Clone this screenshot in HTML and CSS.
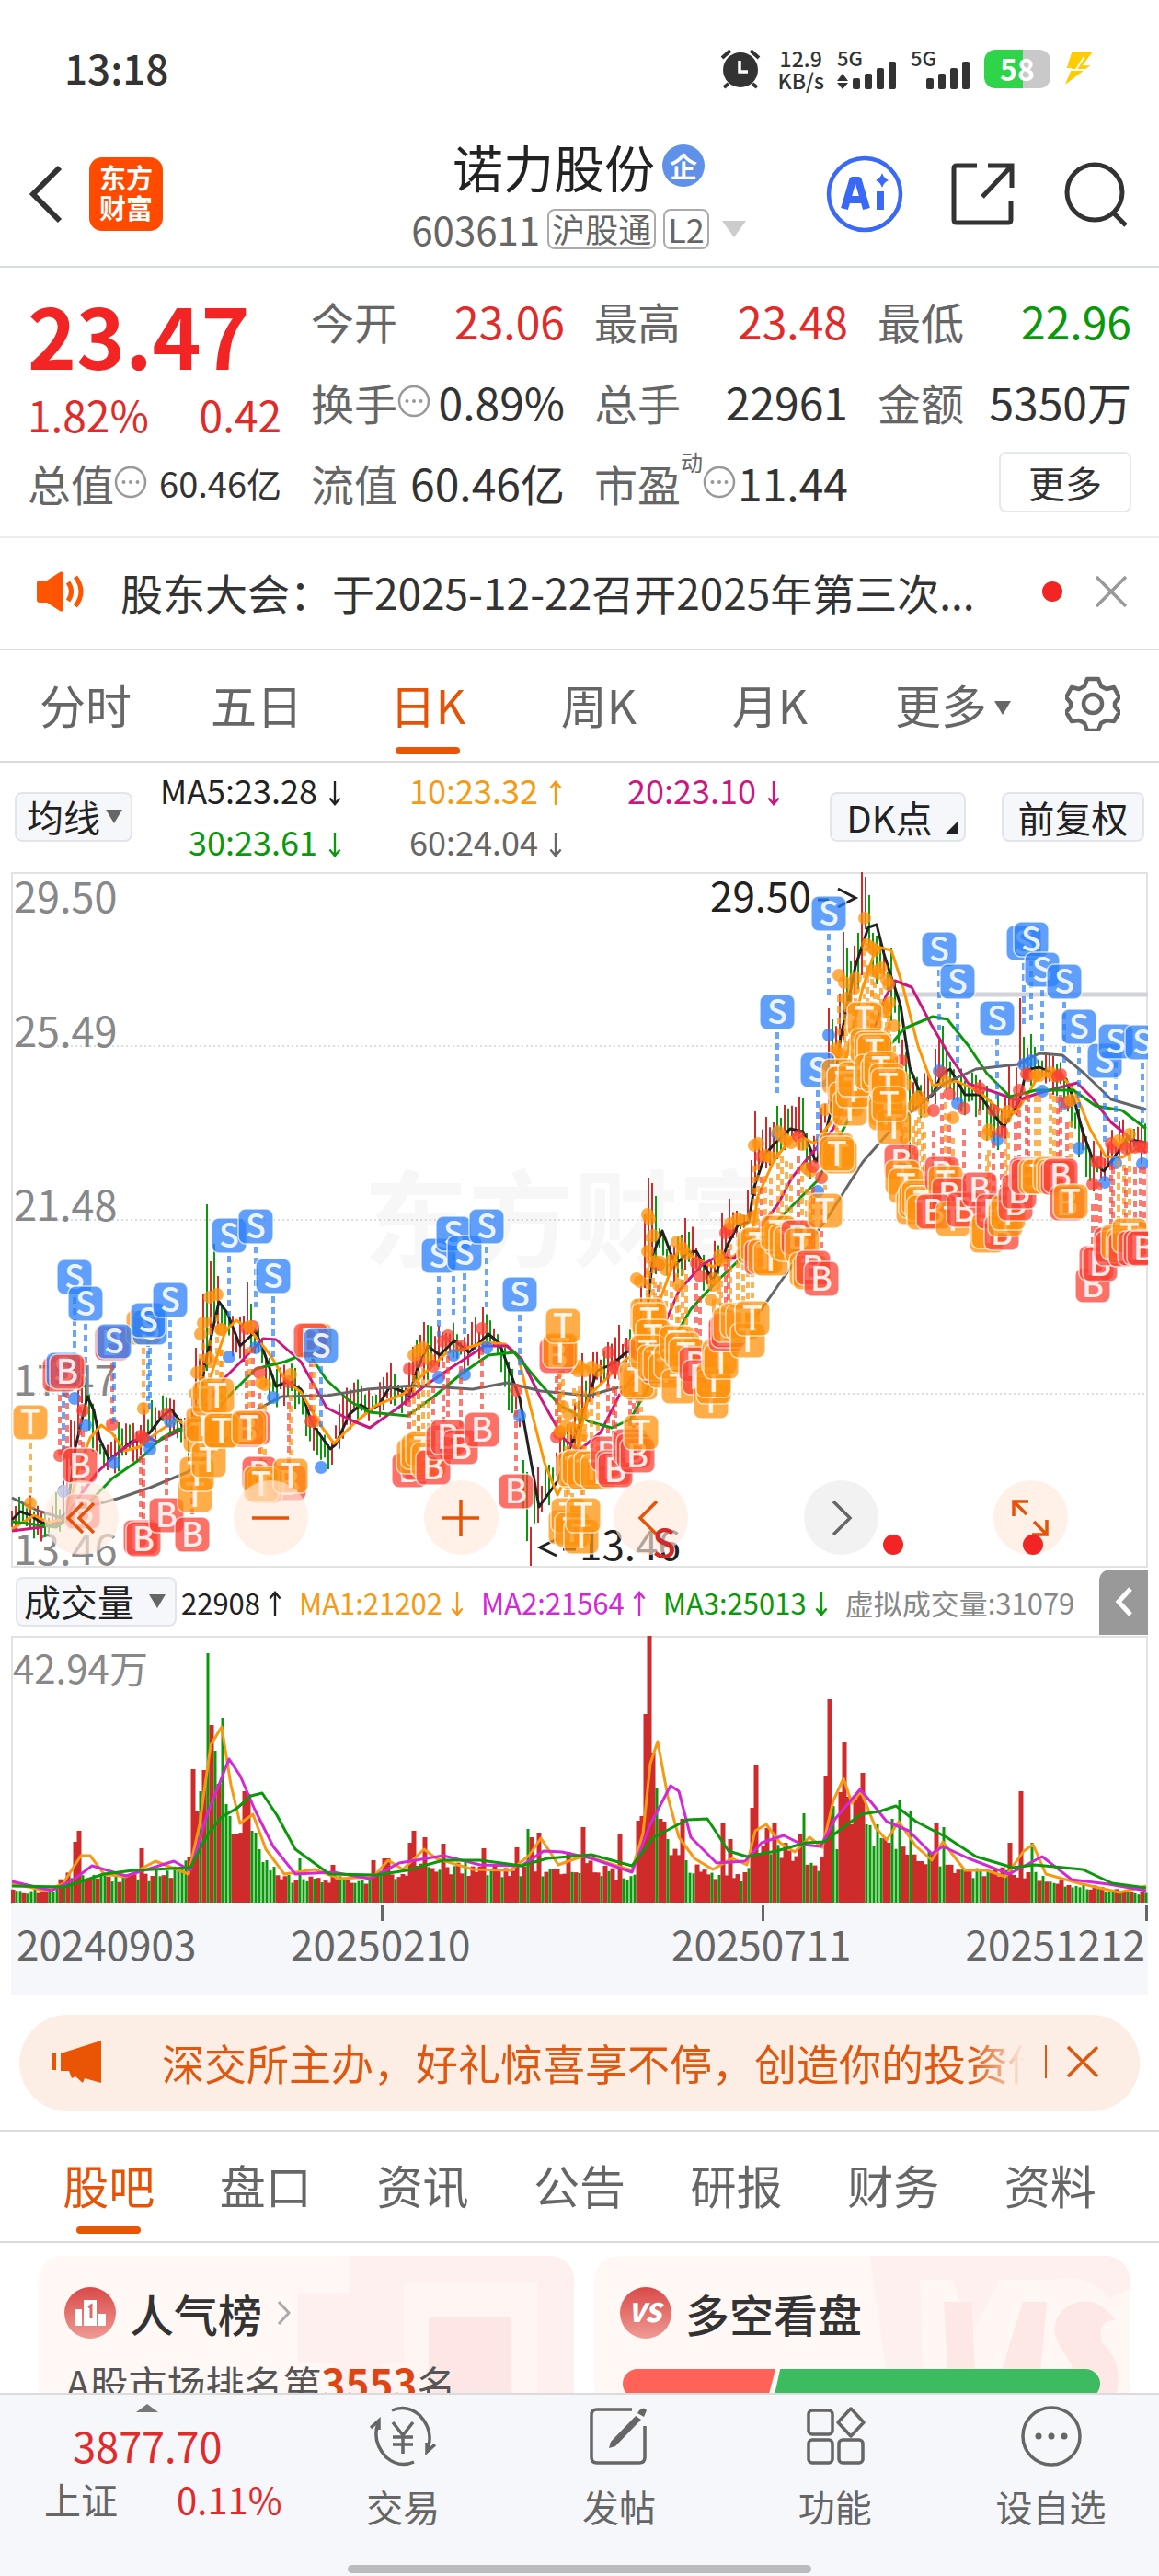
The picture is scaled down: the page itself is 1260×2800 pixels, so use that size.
FILE: index.html
```html
<!DOCTYPE html>
<html lang="zh-CN">
<head>
    <meta charset="UTF-8">
    <meta name="viewport" content="width=device-width, initial-scale=1.0">
    <title>诺力股份 603611</title>
    <link rel="stylesheet" href="styles.css">
</head>
<body>
    <svg class="defs" aria-hidden="true">
        <symbol id="down" viewBox="0 0 16 30"><path d="M8 1v27M2 21l6 7 6-7" fill="none" stroke="currentColor" stroke-width="2.5"/></symbol>
        <symbol id="up" viewBox="0 0 16 30"><path d="M8 29V2M2 9l6-7 6 7" fill="none" stroke="currentColor" stroke-width="2.5"/></symbol>
        <symbol id="more" viewBox="0 0 36 36"><circle cx="18" cy="18" r="16" fill="none" stroke="#999" stroke-width="2.5"/><g fill="#999"><circle cx="10.500" cy="18" r="2"/><circle cx="18" cy="18" r="2"/><circle cx="25.500" cy="18" r="2"/></g></symbol>
        <symbol id="close" viewBox="0 0 36 36"><path d="M2 2l32 32M34 2L2 34" fill="none" stroke="currentColor" stroke-width="3.500"/></symbol>
    </svg>

    <div class="status-bar">
        <span class="clock">13:18</span>
        <div class="status-icons">
            <svg class="alarm" viewBox="0 0 44 44"><circle cx="22" cy="23" r="19" fill="#333"/><path d="M2 10l9-8M42 10l-9-8M9 38l-5 4M35 38l5 4" stroke="#333" stroke-width="4"/><path d="M21 13v12h9" fill="none" stroke="#fff" stroke-width="3.5"/></svg>
            <span class="speed">12.9<br>KB/s</span>
            <span class="signal"><small>5G</small><svg viewBox="0 0 66 44"><g fill="#333"><path d="M0 35l6-8 6 8zM0 37l6 7 6-7z"/><rect x="17" y="32" width="8" height="12" rx="2"/><rect x="30" y="27" width="8" height="17" rx="2"/><rect x="43" y="21" width="8" height="23" rx="2"/><rect x="56" y="14" width="8" height="30" rx="2"/></g></svg></span>
            <span class="signal"><small>5G</small><svg viewBox="0 0 66 44"><g fill="#333"><rect x="17" y="32" width="8" height="12" rx="2"/><rect x="30" y="27" width="8" height="17" rx="2"/><rect x="43" y="21" width="8" height="23" rx="2"/><rect x="56" y="14" width="8" height="30" rx="2"/></g></svg></span>
            <span class="battery">58</span>
            <svg class="bolt" viewBox="0 0 36 40"><path d="M10 0h24L22 16h9L2 38l8-19H4z" fill="#fc0"/><path d="M14 22L24 6M8 21h18" stroke="#fff" stroke-width="2"/></svg>
        </div>
    </div>

    <header class="header">
        <div class="header-left">
            <button class="icon-btn" aria-label="返回"><svg width="36" height="64" viewBox="0 0 36 64"><path d="M33 3L4 32l29 29" fill="none" stroke="#333" stroke-width="6"/></svg></button>
            <a class="logo" href="#">东方<br>财富</a>
        </div>
        <div class="stock">
            <h1>诺力股份<span class="badge-qi">企</span></h1>
            <div class="stock-code">603611<span class="tag">沪股通</span><span class="tag">L2</span><i class="tri-down"></i></div>
        </div>
        <div class="header-right">
            <button class="icon-btn" aria-label="AI"><svg width="84" height="84" viewBox="0 0 84 84"><circle cx="42" cy="42" r="39" fill="none" stroke="#3a68f7" stroke-width="4.500"/><path d="M20 58l9-31h6l9 31M24 48h16M59 39v20" fill="none" stroke="#3a68f7" stroke-width="8" stroke-linejoin="round"/><path d="M61 19q2 6 7 8-5 2-7 8-2-6-7-8 5-2 7-8z" fill="#3a68f7"/></svg></button>
            <button class="icon-btn" aria-label="分享"><svg width="70" height="70" viewBox="0 0 70 70"><path d="M28 4H6q-3 0-3 3v56q0 3 3 3h56q3 0 3-3V42M40 4h26v24M66 4L34 38" fill="none" stroke="#333" stroke-width="5"/></svg></button>
            <button class="icon-btn" aria-label="搜索"><svg width="72" height="72" viewBox="0 0 72 72"><circle cx="34" cy="34" r="30" fill="none" stroke="#333" stroke-width="5"/><path d="M54 56l14 14" stroke="#333" stroke-width="5"/></svg></button>
        </div>
    </header>

    <section class="quote">
        <div class="price-box">
            <div class="price">23.47</div>
            <div class="change"><span>1.82%</span><span>0.42</span></div>
        </div>
        <div class="item"><span>今开</span><b class="red">23.06</b></div>
        <div class="item"><span>最高</span><b class="red">23.48</b></div>
        <div class="item"><span>最低</span><b class="green">22.96</b></div>
        <div class="item"><span>换手<svg class="more"><use href="#more"/></svg></span><b>0.89%</b></div>
        <div class="item"><span>总手</span><b>22961</b></div>
        <div class="item"><span>金额</span><b>5350万</b></div>
        <div class="item"><span>总值<svg class="more"><use href="#more"/></svg></span><b class="small">60.46亿</b></div>
        <div class="item"><span>流值</span><b>60.46亿</b></div>
        <div class="item"><span>市盈<sup>动</sup><svg class="more"><use href="#more"/></svg></span><b>11.44</b></div>
        <div class="item item-btn"><button class="more-btn">更多</button></div>
    </section>

    <section class="notice">
        <svg class="horn" viewBox="0 0 52 44"><path d="M0 13q0-3 3-3h8L25 1q4-2 4 3v36q0 5-4 3L11 34H3q-3 0-3-3z" fill="#ff5500"/><path d="M34 12q7 10 0 20M42 6q12 16 0 32" fill="none" stroke="#ff5500" stroke-width="5"/></svg>
        <a class="notice-text" href="#">股东大会：于2025-12-22召开2025年第三次...</a>
        <i class="dot"></i>
        <button class="icon-btn gray" aria-label="关闭"><svg class="close"><use href="#close"/></svg></button>
    </section>

    <nav class="period-tabs">
        <a href="#">分时</a>
        <a href="#">五日</a>
        <a href="#" class="active">日K</a>
        <a href="#">周K</a>
        <a href="#">月K</a>
        <a href="#" class="wide">更多<i class="tri-small"></i></a>
        <button class="icon-btn" aria-label="设置"><svg width="60" height="60" viewBox="0 0 60 60"><path d="M24 3h12l3 8 6 3 8-2 6 11-5 6v4l5 6-6 10-8-1-6 3-3 8H24l-3-8-6-3-8 1-6-10 5-6v-4l-5-6 6-11 8 2 6-3z" fill="none" stroke="#666" stroke-width="4.500" stroke-linejoin="round"/><circle cx="30" cy="30" r="10" fill="none" stroke="#666" stroke-width="4.500"/></svg></button>
    </nav>

    <section class="ma-bar">
        <label class="select"><select aria-label="主图指标"><option>均线</option></select></label>
        <div class="ma-values">
            <span class="ma5">MA5:23.28<svg class="arrow"><use href="#down"/></svg></span>
            <span class="orange">10:23.32<svg class="arrow"><use href="#up"/></svg></span>
            <span class="pink">20:23.10<svg class="arrow"><use href="#down"/></svg></span>
            <span class="green">30:23.61<svg class="arrow"><use href="#down"/></svg></span>
            <span class="grey">60:24.04<svg class="arrow"><use href="#down"/></svg></span>
        </div>
        <button class="chip chip-dk">DK点<i class="corner"></i></button>
        <button class="chip">前复权</button>
    </section>

    <section class="chart-box">
        <svg id="kline" class="chart" viewBox="12 948 1236 756" role="img" aria-label="日K线"></svg>
        <div class="controls">
            <button class="round" aria-label="最左"><svg viewBox="0 0 40 40"><path d="M22 4L6 20l16 16M34 4L18 20l16 16"/></svg></button>
            <button class="round" aria-label="缩小"><svg viewBox="0 0 40 40"><path d="M0 20h40"/></svg></button>
            <button class="round" aria-label="放大"><svg viewBox="0 0 40 40"><path d="M0 20h40M20 0v40"/></svg></button>
            <button class="round" aria-label="左移"><svg viewBox="0 0 40 40"><path d="M27 2L9 20l18 18"/></svg><i class="flag">S</i></button>
            <button class="round off" aria-label="右移"><svg viewBox="0 0 40 40"><path d="M12 2l18 18-18 18"/></svg><i class="dot pin pin-side"></i></button>
            <button class="round" aria-label="全屏"><svg viewBox="0 0 40 40"><path d="M2 18V2h16M2 2l14 14M38 22v16H22M38 38L24 24"/></svg><i class="dot pin"></i></button>
        </div>
    </section>

    <section class="vol-bar">
        <label class="select select-vol"><select aria-label="副图指标"><option>成交量</option></select></label>
        <span class="ma5">22908<svg class="arrow"><use href="#up"/></svg></span>
        <span class="orange">MA1:21202<svg class="arrow"><use href="#down"/></svg></span>
        <span class="magenta">MA2:21564<svg class="arrow"><use href="#up"/></svg></span>
        <span class="green">MA3:25013<svg class="arrow"><use href="#down"/></svg></span>
        <span class="virtual">虚拟成交量:31079</span>
        <button class="expand" aria-label="展开"><svg width="20" height="32" viewBox="0 0 20 32"><path d="M17 2L4 16l13 14" fill="none" stroke="#fff" stroke-width="5"/></svg></button>
    </section>
    <section class="chart-box">
        <svg id="volume" class="chart" viewBox="12 1778 1236 292" role="img" aria-label="成交量"></svg>
        <div class="dates"><span>20240903</span><span>20250210</span><span>20250711</span><span>20251212</span></div>
    </section>

    <section class="banner">
        <svg class="megaphone" viewBox="0 0 54 46"><path d="M0 14h5v18H0zM10 14L54 0v46l-18-5-2 5-8-7-4 2-3-8h-9z" fill="#e95504"/></svg>
        <a class="banner-text" href="#">深交所主办，好礼惊喜享不停，创造你的投资传奇</a>
        <button class="icon-btn banner-close" aria-label="关闭"><svg class="close"><use href="#close"/></svg></button>
    </section>

    <nav class="info-tabs">
        <a href="#" class="active">股吧</a>
        <a href="#">盘口</a>
        <a href="#">资讯</a>
        <a href="#">公告</a>
        <a href="#">研报</a>
        <a href="#">财务</a>
        <a href="#">资料</a>
    </nav>

    <section class="cards">
        <article class="card">
            <svg class="card-bg" viewBox="0 0 300 160"><path d="M0 40h55V0h245v160H40v-44H0z" fill="#fdf0ee"/><path d="M115 30h145v130H90v-44h25z" fill="#fff6f3"/><path d="M142 66h90v94h-90z" fill="#fde6e4"/></svg>
            <h2><svg class="card-icon" viewBox="0 0 56 56"><circle cx="28" cy="28" r="28" fill="url(#g)"/><defs><linearGradient id="g" x2="0" y2="1"><stop stop-color="#d94a48"/><stop offset="1" stop-color="#f09a94"/></linearGradient></defs><path d="M11 24h8v18h-8zM21 14h14v28H21zM37 29h8v13h-8z" fill="#fff"/><path d="M26 22l3-2v14" fill="none" stroke="#dd6a66" stroke-width="3"/></svg>人气榜<svg class="chev" viewBox="0 0 18 28"><path d="M3 2l11 12L3 26" fill="none" stroke="#aaa" stroke-width="3"/></svg></h2>
            <p>A股市场排名第<strong>3553</strong>名</p>
        </article>
        <article class="card">
            <svg class="card-bg" viewBox="0 0 300 160"><path d="M18 0h282v160H40z" fill="#fdf0ee"/><path d="M72 26h36l20 60 30-60h58q40-8 62 20l22-10v124H76z" fill="#fff7f4"/><path d="M98 50h30l6 110h-30zM184 50h26l-10 110h-50zM284 70q-20-30-50-16-30 20-2 56 14 20 6 50h44q16-40-12-66-6-24 14-24z" fill="#fde8e5"/></svg>
            <h2><svg class="card-icon" viewBox="0 0 56 56"><circle cx="28" cy="28" r="28" fill="url(#g)"/><text x="27" y="38" text-anchor="middle" fill="#fff" font-size="28" font-weight="900" font-style="italic">VS</text></svg>多空看盘</h2>
            <div class="vs-bar"><i class="bull"></i><i class="bear"></i></div>
        </article>
    </section>

    <footer class="bottom-bar">
        <div class="bottom-items">
            <a class="index" href="#">
                <i class="tri-up"></i>
                <span class="index-value">3877.70</span>
                <span class="index-row"><span>上证</span><b>0.11%</b></span>
            </a>
            <a class="tool" href="#"><svg viewBox="0 0 72 66"><g fill="none" stroke="#666" stroke-width="3.500"><path d="M24 5Q40-2 54 10q16 17 9 37M48 61Q32 68 18 56 2 39 9 19M1 24l9-8v10M71 42l-9 8v-10"/><path d="M25 18l11 14 11-14M36 32v20M25 34h22M25 42h22"/></g></svg>交易</a>
            <a class="tool" href="#"><svg viewBox="0 0 72 66"><path d="M50 4H12q-6 0-6 6v46q0 6 6 6h46q6 0 6-6V22" fill="none" stroke="#666" stroke-width="3.500"/><path d="M58 5q5-5 8 0l-3 7-7-4zM54 11l6 4-28 29-7 2 2-7z" fill="#666"/></svg>发帖</a>
            <a class="tool" href="#"><svg viewBox="0 0 72 66"><g fill="none" stroke="#666" stroke-width="3.500"><rect x="7" y="5" width="26" height="26" rx="4"/><rect x="7" y="37" width="26" height="25" rx="4"/><rect x="40" y="37" width="26" height="25" rx="4"/><path d="M53 3l14 15-14 15-14-15z" stroke-linejoin="round"/></g></svg>功能</a>
            <a class="tool" href="#"><svg viewBox="0 0 72 66"><circle cx="36" cy="33" r="31" fill="none" stroke="#666" stroke-width="3.500"/><g fill="#666"><circle cx="22" cy="33" r="3.500"/><circle cx="36" cy="33" r="3.500"/><circle cx="50" cy="33" r="3.500"/></g></svg>设自选</a>
        </div>
        <div class="home-line"></div>
    </footer>

    <script src="chart.js"></script>
</body>
</html>
```
FILE: styles.css
```css
* {
    box-sizing: border-box;
}
body {
    margin: 0;
    background: #fff;
    color: #333;
    font-family: 'Noto Sans CJK SC', 'Noto Sans', sans-serif;
}
a {
    color: inherit;
    text-decoration: none;
}
button {
    font-family: inherit;
    cursor: pointer;
}
.defs {
    position: absolute;
    width: 0;
    height: 0;
}
.icon-btn {
    display: flex;
    padding: 0;
    border: none;
    background: none;
    color: inherit;
}
.red { color: #e12b2b; }
.green { color: #0a990a; }
.orange { color: #f59a12; }
.pink { color: #cc1680; }
.magenta { color: #d428d8; }
.grey { color: #666; }
.gray { color: #999; }
.ma5 { color: #222; }

/* status bar */
.status-bar {
    display: flex;
    justify-content: space-between;
    align-items: center;
    height: 150px;
    padding: 0 70px;
}
.clock {
    margin-top: -4px;
    font-size: 44px;
    font-weight: 500;
}
.status-icons {
    display: flex;
    align-items: center;
    gap: 14px;
}
.alarm {
    width: 44px;
    height: 44px;
    margin-right: 4px;
}
.speed {
    font-size: 23px;
    line-height: 24px;
    font-weight: 500;
    text-align: center;
}
.signal {
    position: relative;
    width: 66px;
    height: 44px;
}
.signal small {
    position: absolute;
    top: 0;
    left: 0;
    font-size: 22px;
    line-height: 18px;
    font-weight: 500;
}
.signal svg {
    width: 66px;
    height: 44px;
}
.battery {
    width: 72px;
    height: 42px;
    border-radius: 12px;
    background: linear-gradient(to right, #2fd548 58%, #c9c9c9 58%);
    color: #fff;
    font-size: 32px;
    line-height: 40px;
    font-weight: 700;
    text-align: center;
}
.bolt {
    width: 34px;
    height: 40px;
}

/* header */
.header {
    display: grid;
    grid-template-columns: 1fr auto 1fr;
    align-items: center;
    height: 141px;
    padding: 0 32px;
    border-bottom: 2px solid #d9dcdc;
}
.header-left {
    display: flex;
    align-items: center;
    gap: 29px;
    margin-top: -18px;
}
.logo {
    width: 80px;
    height: 80px;
    padding-top: 5px;
    border-radius: 14px;
    background: #ff4a00;
    color: #fff;
    font-size: 29px;
    line-height: 33px;
    font-weight: 700;
    text-align: center;
}
.stock {
    margin-top: -12px;
    margin-right: 2px;
}
.stock h1 {
    display: flex;
    justify-content: center;
    align-items: center;
    gap: 8px;
    margin: 0;
    color: #222;
    font-size: 55px;
    line-height: 70px;
    font-weight: 400;
}
.badge-qi {
    width: 46px;
    height: 46px;
    border-radius: 50%;
    background: #5f90ea;
    color: #fff;
    font-size: 30px;
    line-height: 44px;
    font-weight: 700;
    text-align: center;
}
.stock-code {
    display: flex;
    align-items: center;
    height: 68px;
    color: #666;
    font-size: 42px;
}
.tag {
    height: 44px;
    margin-left: 8px;
    padding: 0 3px;
    border: 2px solid #aaa;
    border-radius: 8px;
    font-size: 36px;
    line-height: 38px;
}
.tri-down {
    margin-left: 14px;
    border: 13px solid transparent;
    border-top: 18px solid #ccc;
    border-bottom: 0;
}
.header-right {
    display: flex;
    justify-content: flex-end;
    align-items: center;
    gap: 52px;
    margin-top: -18px;
}

/* quote */
.quote {
    display: grid;
    grid-template-columns: repeat(4, 1fr);
    grid-auto-rows: 88px;
    column-gap: 32px;
    padding: 13px 30px 15px;
    border-bottom: 2px solid #ececec;
}
.price-box {
    grid-row: span 2;
    color: #e12b2b;
}
.price {
    color: #f22424;
    font-size: 90px;
    line-height: 118px;
    font-weight: 700;
}
.change {
    display: flex;
    justify-content: space-between;
    font-size: 46px;
    line-height: 56px;
}
.item {
    display: flex;
    justify-content: space-between;
    align-items: center;
    white-space: nowrap;
}
.item span {
    display: flex;
    align-items: center;
    color: #666;
    font-size: 47px;
}
.item b {
    font-size: 48px;
    font-weight: 400;
}
.item .small {
    font-size: 38px;
}
.item sup {
    align-self: flex-start;
    font-size: 24px;
    line-height: 24px;
}
.more {
    width: 36px;
    height: 36px;
}
.item-btn {
    justify-content: flex-end;
}
.more-btn {
    width: 144px;
    height: 66px;
    border: 2px solid #e6e9e9;
    border-radius: 8px;
    background: #fff;
    color: #333;
    font-size: 40px;
    line-height: 56px;
}

/* notice */
.notice {
    display: flex;
    align-items: center;
    height: 122px;
    padding: 0 34px 4px 40px;
    border-bottom: 2px solid #d9dcdc;
}
.horn {
    width: 52px;
    height: 44px;
}
.notice-text {
    flex: 1;
    padding-left: 39px;
    font-size: 46px;
    white-space: nowrap;
}
.dot {
    width: 22px;
    height: 22px;
    margin-right: 35px;
    border-radius: 50%;
    background: #f22424;
}
.close {
    width: 36px;
    height: 36px;
}

/* tabs */
.period-tabs, .info-tabs {
    display: flex;
    height: 122px;
    border-bottom: 2px solid #d9dcdc;
    color: #666;
    font-size: 50px;
    line-height: 114px;
    text-align: center;
}
.period-tabs {
    align-items: center;
    padding-right: 26px;
    padding-bottom: 4px;
}
.period-tabs a {
    flex: 186;
}
.period-tabs .wide {
    flex: 212;
}
.period-tabs .icon-btn {
    flex: 92;
    justify-content: center;
}
.period-tabs a, .info-tabs a {
    position: relative;
}
.info-tabs {
    height: 123px;
    padding: 0 33px;
    border-top: 2px solid #d9dcdc;
}
.info-tabs a {
    flex: 1;
}
.active {
    color: #e65307;
}
.active::after {
    content: "";
    position: absolute;
    bottom: 2px;
    left: 50%;
    width: 70px;
    height: 8px;
    margin-left: -35px;
    border-radius: 4px;
    background: #e95504;
}
.info-tabs .active::after {
    bottom: 8px;
}
.tri-small {
    display: inline-block;
    margin-left: 8px;
    border: 9px solid transparent;
    border-top: 15px solid #666;
    border-bottom: 0;
    vertical-align: 10px;
}

/* indicator rows */
.ma-bar {
    display: flex;
    align-items: center;
    height: 119px;
    padding: 0 16px 2px;
}
.select {
    position: relative;
    width: 128px;
    height: 54px;
    border: 2px solid #e3e6e8;
    border-radius: 8px;
    background: #f6f7fa;
}
.select::after {
    content: "";
    position: absolute;
    top: 17px;
    right: 9px;
    border: 9px solid transparent;
    border-top: 15px solid #666;
    border-bottom: 0;
}
.select select {
    width: 100%;
    height: 48px;
    padding: 0 0 0 11px;
    border: none;
    appearance: none;
    background: none;
    color: #222;
    font-family: inherit;
    font-size: 40px;
    line-height: 48px;
}
.ma-values {
    display: grid;
    grid-template-columns: 202px 240px 237px;
    margin: 0 auto 0 26px;
    padding-bottom: 4px;
    font-size: 36px;
    line-height: 56px;
    text-align: right;
}
.arrow {
    width: 16px;
    height: 28px;
    margin-left: 8px;
    vertical-align: -2px;
}
.ma-values .arrow {
    margin-left: 11px;
}
.chip {
    position: relative;
    width: 155px;
    height: 54px;
    padding: 0;
    border: 2px solid #e3e6e8;
    border-radius: 8px;
    background: #f6f7fa;
    color: #222;
    font-size: 40px;
    line-height: 46px;
}
.chip-dk {
    width: 148px;
    margin-right: 39px;
    padding-right: 18px;
}
.corner {
    position: absolute;
    right: 6px;
    bottom: 7px;
    border-bottom: 14px solid #222;
    border-left: 14px solid transparent;
}
.chart-box {
    position: relative;
    margin: 0 12px;
}
.chart {
    display: block;
    width: 100%;
    height: auto;
}
.controls {
    position: absolute;
    left: 36px;
    right: 87px;
    bottom: 14px;
    display: flex;
    justify-content: space-between;
}
.round {
    position: relative;
    width: 81px;
    height: 81px;
    padding: 20px;
    border: none;
    border-radius: 50%;
    background: rgba(255, 232, 220, 0.65);
}
.round svg {
    display: block;
    width: 40px;
    height: 40px;
    fill: none;
    stroke: #e65307;
    stroke-width: 3.5;
}
.round.off {
    background: #f2f2f2;
}
.round.off svg {
    stroke: #666;
}
/* trade marks sitting on top of the round buttons */
.pin {
    position: absolute;
    top: 59px;
    left: 32px;
    margin: 0;
}
.pin-side {
    left: 86px;
}
.flag {
    position: absolute;
    top: 45px;
    left: 42px;
    color: #cf2b2b;
    font-size: 42px;
    line-height: 42px;
    font-style: normal;
    font-weight: 500;
}
.vol-bar {
    display: flex;
    align-items: center;
    gap: 18px;
    height: 74px;
    padding: 0 12px 0 17px;
    font-size: 31px;
    white-space: nowrap;
}
.select-vol {
    width: 175px;
    margin-right: -13px;
}
.select-vol::after {
    right: 10px;
}
.select-vol select {
    padding-left: 7px;
}
.virtual {
    color: #888;
}
.expand {
    display: flex;
    justify-content: center;
    align-items: center;
    width: 53px;
    height: 71px;
    margin-left: auto;
    border: none;
    border-radius: 12px 0 0 0;
    background: #999;
}
.dates {
    display: grid;
    grid-template-columns: 16% 33% 34% 17%;
    height: 99px;
    background: #f6f7fa;
    color: #666;
    font-size: 44px;
    line-height: 84px;
    text-align: center;
    white-space: nowrap;
}
.dates span {
    position: relative;
}
.dates span + span::before {
    content: "";
    position: absolute;
    top: 1px;
    left: 50%;
    width: 3px;
    height: 17px;
    background: #666;
}
.dates span:first-child {
    padding-left: 6px;
}
.dates span:last-child {
    padding-right: 3px;
    text-align: right;
}
.dates span:last-child::before {
    right: 0;
    left: auto;
}

/* banner */
.banner {
    display: flex;
    align-items: center;
    height: 105px;
    margin: 21px 21px 20px;
    padding: 0 44px 3px 35px;
    border-radius: 53px;
    background: #fceee5;
    color: #e0580f;
}
.megaphone {
    width: 54px;
    height: 46px;
}
.banner-text {
    flex: 1;
    width: 0;
    margin: 0 22px 0 66px;
    overflow: hidden;
    font-size: 46px;
    white-space: nowrap;
    -webkit-mask-image: linear-gradient(to right, #000 94%, transparent);
    mask-image: linear-gradient(to right, #000 94%, transparent);
}
.banner-close {
    padding-left: 21px;
    border-left: 2px solid #e0580f;
}

/* cards */
.cards {
    display: grid;
    grid-template-columns: 1fr 1fr;
    gap: 22px;
    padding: 14px 32px 0 42px;
}
.card {
    position: relative;
    height: 190px;
    padding: 30px 28px;
    overflow: hidden;
    border-radius: 26px;
    background: #fff8f5;
}
.card-bg {
    position: absolute;
    top: 0;
    right: 0;
    width: 300px;
    height: 160px;
}
.card h2 {
    position: relative;
    display: flex;
    align-items: center;
    gap: 15px;
    margin: 0;
    font-size: 48px;
    line-height: 64px;
    font-weight: 500;
}
.card-icon {
    width: 56px;
    height: 56px;
}
.chev {
    width: 18px;
    height: 28px;
}
.card p {
    position: relative;
    margin: 15px 0 0 2px;
    color: #555;
    font-size: 42px;
    line-height: 56px;
}
.card strong {
    color: #df4413;
    font-size: 44px;
}
.vs-bar {
    position: relative;
    display: flex;
    gap: 4px;
    height: 32px;
    margin-top: 29px;
    margin-right: 4px;
    margin-left: 3px;
    overflow: hidden;
    border-radius: 16px;
}
.bull {
    width: 32%;
    background: #ff6256;
    clip-path: polygon(0 0, 100% 0, 95% 100%, 0 100%);
}
.bear {
    flex: 1;
    margin-left: -6px;
    background: #3dbb60;
    clip-path: polygon(2% 0, 100% 0, 100% 100%, 0 100%);
}

/* bottom bar */
.bottom-bar {
    position: fixed;
    right: 0;
    bottom: 0;
    left: 0;
    height: 199px;
    border-top: 2px solid #d9dcdc;
    background: #f6f7fa;
}
.bottom-items {
    display: flex;
}
.index {
    display: flex;
    flex-direction: column;
    align-items: center;
    flex: 321;
    padding-top: 10px;
    color: #e12b2b;
}
.tri-up {
    border: 12px solid transparent;
    border-top: 0;
    border-bottom: 9px solid #777;
}
.index-value {
    margin-top: 5px;
    font-size: 45px;
    line-height: 62px;
}
.index-row {
    display: flex;
    gap: 64px;
    margin-left: 34px;
    font-size: 40px;
    line-height: 54px;
}
.index-row span {
    color: #666;
}
.index-row b {
    font-weight: 400;
}
.tool {
    display: flex;
    flex-direction: column;
    align-items: center;
    flex: 235;
    gap: 14px;
    padding-top: 12px;
    color: #666;
    font-size: 40px;
    line-height: 58px;
}
.tool svg {
    width: 72px;
    height: 66px;
}
.home-line {
    position: absolute;
    bottom: 3px;
    left: 30%;
    width: 40%;
    height: 9px;
    border-radius: 5px;
    background: #bbbcbe;
}

/* chart svg */
.axis { fill: #888; font-size: 45px; }
.axis-vol { font-size: 42px; }
.peak { fill: #222; font-size: 44px; }
.watermark { fill: #f7f7f7; font-size: 114px; font-weight: 700; }
.grid { stroke: #bbb; stroke-width: 1; stroke-dasharray: 2 3; }
.frame { fill: none; stroke: #e2e2e2; stroke-width: 2; }
.ma { fill: none; stroke-width: 3; stroke-linejoin: round; }
.mark { font-size: 36px; font-weight: 500; text-anchor: middle; fill: #fff; fill-opacity: 0.9; }
```
FILE: chart.js
```js
const UP = '#cf2b2b', DOWN = '#0a990a';
const kline = document.getElementById('kline');
const volume = document.getElementById('volume');

// moving averages as x,y points
const ma5 = '13,1652 22,1643 33,1647 45,1655 61,1655 73,1643 82,1573 95,1518 102,1533 108,1563 119,1587 131,1577 143,1567 153,1565 163,1557 176,1540 186,1532 196,1545 204,1562 216,1540 222,1487 238,1415 247,1427 261,1463 278,1447 286,1467 300,1507 312,1502 327,1510 339,1547 359,1575 365,1570 380,1537 392,1527 402,1533 412,1527 424,1507 439,1513 445,1517 453,1490 465,1463 478,1473 494,1457 510,1470 531,1450 543,1460 565,1520 586,1638 606,1610 620,1573 632,1543 649,1490 665,1483 681,1470 695,1463 704,1423 710,1363 720,1338 734,1375 747,1362 757,1360 775,1392 791,1353 802,1332 814,1328 820,1290 832,1255 842,1243 859,1227 873,1230 887,1263 893,1250 902,1213 914,1127 922,1090 930,1050 944,1008 953,1005 961,1037 979,1093 989,1160 1004,1197 1014,1190 1024,1167 1033,1162 1049,1190 1065,1190 1079,1210 1091,1225 1108,1197 1116,1163 1130,1160 1159,1173 1169,1200 1177,1230 1189,1263 1200,1273 1210,1260 1224,1238 1246,1242';
const ma10 = '13,1662 37,1647 53,1655 73,1650 84,1600 98,1563 110,1549 122,1558 135,1577 151,1573 171,1557 192,1543 204,1550 220,1527 235,1477 245,1447 257,1435 273,1447 294,1473 310,1500 327,1513 347,1547 363,1569 384,1548 408,1528 439,1515 457,1497 486,1470 502,1467 527,1459 549,1461 563,1473 576,1527 592,1590 606,1625 624,1587 640,1517 661,1497 681,1477 702,1467 716,1417 738,1357 755,1367 775,1377 796,1367 816,1350 824,1300 842,1260 865,1232 885,1243 906,1217 922,1140 938,1073 953,1029 969,1033 981,1070 998,1137 1014,1180 1040,1175 1065,1187 1085,1205 1104,1210 1120,1185 1130,1167 1155,1170 1169,1187 1185,1227 1202,1257 1220,1258 1234,1250 1246,1247';
const ma20 = '13,1664 45,1660 67,1655 86,1627 106,1600 131,1577 155,1560 171,1567 196,1555 220,1533 245,1497 265,1477 286,1455 300,1456 327,1480 355,1530 380,1543 402,1552 433,1530 461,1507 490,1487 527,1463 551,1463 567,1477 588,1520 612,1563 629,1577 653,1557 673,1517 693,1490 718,1450 738,1403 763,1375 781,1365 798,1368 824,1337 845,1310 861,1280 883,1253 906,1227 930,1170 951,1117 963,1083 973,1066 991,1073 1012,1113 1032,1147 1053,1178 1081,1187 1106,1196 1130,1188 1171,1177 1187,1193 1208,1220 1232,1240 1246,1253';
const ma30 = '13,1654 61,1660 90,1640 122,1607 151,1587 176,1563 194,1553 204,1558 229,1540 253,1513 278,1488 310,1480 335,1470 355,1500 380,1523 402,1535 443,1539 473,1517 502,1493 531,1473 559,1470 584,1500 608,1527 640,1545 665,1552 685,1543 702,1513 722,1473 751,1423 779,1393 800,1373 832,1340 865,1307 889,1283 914,1233 938,1187 967,1137 983,1118 1014,1105 1030,1108 1053,1137 1073,1167 1098,1192 1126,1185 1167,1185 1191,1202 1220,1207 1246,1227';
const ma60 = '13,1628 41,1642 67,1650 98,1637 131,1628 163,1617 204,1600 237,1573 278,1533 306,1518 355,1517 400,1510 449,1506 514,1510 551,1503 588,1512 640,1517 665,1510 722,1497 783,1473 828,1423 853,1387 902,1320 938,1263 967,1230 991,1208 1028,1177 1061,1162 1106,1157 1130,1145 1155,1147 1179,1167 1208,1195 1246,1206';

const vma1 = '13,2047 48,2055 68,2048 88,2017 98,2017 113,2037 137,2040 169,2023 205,2037 217,1983 229,1897 241,1877 251,1940 261,1982 275,1972 289,2010 309,2037 342,2032 370,2042 406,2040 422,2022 438,2032 461,2010 474,2020 514,2032 555,2033 575,2017 588,1998 607,2027 635,2017 687,2033 699,1993 707,1917 715,1893 726,1953 738,1997 755,2020 775,2032 796,2020 812,2027 821,1990 833,1983 848,2003 864,2013 880,1997 894,2008 906,1957 917,1933 926,1960 936,1947 952,1987 964,2000 977,1980 996,2007 1013,2022 1025,2002 1049,2033 1073,2033 1093,2040 1113,2012 1123,2005 1137,2037 1173,2047 1217,2057 1246,2050';
const vma2 = '13,2045 56,2055 80,2043 100,2028 137,2039 189,2023 207,2033 225,1973 249,1912 261,1930 277,1967 297,2007 321,2037 362,2035 402,2042 434,2025 482,2017 522,2027 567,2028 591,2012 611,2013 643,2020 687,2035 707,1983 729,1941 738,1947 751,1997 779,2025 810,2023 828,2003 852,1995 872,2005 892,2007 908,1977 935,1945 948,1960 964,1980 988,1990 1013,2015 1025,2007 1053,2020 1097,2037 1133,2018 1165,2043 1205,2048 1246,2055';
const vma3 = '13,2050 70,2051 113,2037 145,2033 207,2030 225,1995 241,1975 257,1966 273,1952 285,1949 301,1973 321,2010 358,2037 410,2038 442,2033 482,2022 522,2022 567,2028 595,2020 643,2016 687,2028 711,1997 747,1978 769,1977 792,2012 812,2018 844,2012 876,2003 896,2002 936,1972 956,1969 974,1963 996,1980 1029,1997 1061,2018 1101,2030 1125,2027 1177,2032 1209,2047 1246,2052';

// long candles: x,high,low,direction
const longBars = '84,1417,1520,d 205,1540,1590,d 213,1465,1540,u 221,1406,1500,u 225,1309,1490,d 229,1371,1480,u 233,1352,1440,d 237,1387,1450,u 265,1430,1480,u 269,1393,1450,u 273,1417,1470,d 357,1570,1597,d 361,1565,1592,u 449,1464,1520,u 461,1437,1500,u 465,1440,1500,d 525,1421,1470,u 553,1480,1533,d 569,1587,1640,d 573,1600,1675,d 577,1660,1702,u 585,1595,1655,u 633,1471,1540,u 645,1470,1520,u 673,1440,1500,u 697,1398,1450,u 701,1320,1400,u 705,1280,1370,u 709,1286,1380,u 713,1300,1385,d 745,1324,1380,u 785,1318,1370,u 793,1303,1350,u 821,1208,1300,u 833,1214,1270,u 845,1202,1260,d 853,1201,1250,u 869,1192,1250,u 873,1193,1250,d 901,1096,1200,u 905,1108,1180,d 917,1013,1130,u 921,1030,1100,d 925,1045,1090,d 929,1028,1080,u 933,1014,1075,d 937,948,1060,u 941,953,1010,u 945,973,1030,d 949,1014,1060,d 953,1017,1070,d 969,1030,1110,d 989,1160,1260,d 1017,1140,1200,u 1021,1130,1180,u 1025,1115,1180,d 1073,1180,1240,d 1085,1190,1250,d 1097,1157,1220,u 1109,1085,1160,u 1113,1127,1180,d 1121,1124,1180,d 1145,1148,1190,u 1173,1205,1258,d 1189,1240,1295,u';

// B/S/T trade points, "v" = stem goes down from the mark, "^" = up
const marks = [
    'Bv 65,1494 122,1460',
    'Tv 33,1546 156,1443',
    'Sv 69,1489 81,1388 93,1417 163,1443 161,1435 185,1413 124,1458 249,1343 278,1333 297,1387 477,1365 493,1341 505,1362 529,1333 565,1407 845,1100 889,1163 901,993 1021,1032 1041,1067 1084,1107 1113,1025 1121,1021 1133,1054 1157,1067 1173,1116 1201,1153 1213,1132 1242,1133',
    'Bv 73,1491',
    'B^ 87,1593 90,1643 153,1671 156,1673 181,1647 209,1668 275,1552 268,1554 282,1602 314,1612 561,1621',
    'Tv 342,1457',
    'Bv 338,1457',
    'Sv 349,1463',
    'B^ 445,1598 455,1590',
    'T^ 450,1583 455,1578 460,1575 466,1587',
    'B^ 471,1595 482,1568 487,1562 501,1573 524,1554',
    'Bv 608,1470 605,1474',
    'Tv 609,1468 612,1441',
    'T^ 212,1625 214,1602 218,1560 221,1548 227,1587 240,1555 228,1520 236,1517 241,1555 271,1552 288,1615 284,1613 316,1604',
    'T^ 615,1660 618,1647 622,1663 628,1600 624,1597 630,1595 636,1600 643,1596 650,1600 632,1670 634,1647',
    'B^ 661,1580 667,1595 669,1598 685,1572 689,1577 693,1582',
    'T^ 696,1503 692,1500 704,1430 706,1435 710,1453 704,1470 697,1557',
    'B^ 716,1485',
    'T^ 712,1481 718,1482 724,1490 730,1480 738,1507 736,1460 742,1467 746,1473',
    'B^ 757,1483 761,1497',
    'T^ 773,1523 776,1507 776,1500 782,1475 784,1480',
    'B^ 789,1450 792,1446',
    'T^ 794,1440 802,1435 808,1437 813,1457 818,1433',
    'T^ 820,1355 824,1353',
    'B^ 828,1367',
    'T^ 832,1366 838,1368 850,1345 846,1340 855,1350 860,1352',
    'B^ 868,1345',
    'T^ 872,1354 877,1380 881,1383',
    'B^ 884,1378 893,1390',
    'T^ 897,1316 909,1250 913,1257 910,1254',
    'T^ 912,1170 918,1178 920,1195 924,1205 928,1185 930,1173 940,1108 943,1137 948,1140 951,1143 948,1165 955,1168 958,1162 963,1205 963,1210 964,1175 966,1180 972,1225 967,1200',
    'B^ 980,1263',
    'T^ 981,1280 985,1289 993,1312 996,1305 999,1302 1003,1308 1005,1318',
    'B^ 1024,1276',
    'T^ 1028,1286',
    'B^ 1032,1299 1015,1317',
    'T^ 1036,1325',
    'B^ 1048,1315 1065,1293',
    'T^ 1073,1343 1075,1338',
    'B^ 1080,1317 1089,1340',
    'T^ 1093,1325 1096,1318',
    'B^ 1104,1308 1108,1295 1116,1277 1118,1279',
    'T^ 1126,1279 1130,1279 1142,1276 1146,1279',
    'B^ 1150,1280 1153,1278 1160,1308',
    'T^ 1164,1306',
    'B^ 1188,1397 1192,1373 1196,1374 1208,1353 1210,1357',
    'T^ 1216,1350 1222,1354',
    'B^ 1224,1358',
    'T^ 1228,1343',
    'B^ 1234,1357 1240,1356 1244,1357'
];
const markColors = { S: '#2b80fb', B: '#fb4236', T: '#fd920c' };

function toPoints(text) {
    return text.split(' ').map(p => p.split(',').map(Number));
}

function valueAt(points, x) {
    for (let i = 1; i < points.length; i++) {
        if (x <= points[i][0]) {
            const [x0, y0] = points[i - 1];
            const [x1, y1] = points[i];
            return y0 + (y1 - y0) * (x - x0) / (x1 - x0);
        }
    }
    return points[points.length - 1][1];
}

// repeatable noise between 0 and 1
let seed = 11;
function noise() {
    seed = (seed * 16807) % 2147483647;
    return seed / 2147483647;
}

function line(points, color) {
    return `<polyline class="ma" points="${points}" stroke="${color}"/>`;
}

function drawKline() {
    const path = toPoints(ma5);
    const special = {};
    longBars.split(' ').forEach(s => {
        const [x, hi, lo, d] = s.split(',');
        special[x] = [+hi, +lo, d];
    });

    let out = '<text class="watermark" x="395" y="1368">东方财富</text>';
    [1137, 1326, 1515].forEach(y => out += `<line class="grid" x1="12" x2="1248" y1="${y}" y2="${y}"/>`);
    out += '<rect class="frame" x="13" y="949" width="1234" height="754"/>';
    [['29.50', 992], ['25.49', 1138], ['21.48', 1327], ['17.47', 1517], ['13.46', 1701]].forEach(([t, y]) => {
        out += `<text class="axis" x="15" y="${y}">${t}</text>`;
    });
    out += '<text class="peak" x="772" y="991">29.50</text><path d="M889 978h12M911 966l19 10-19 10" fill="none" stroke="#222" stroke-width="3"/>';
    out += '<text class="peak" x="630" y="1696">13.46</text><path d="M605 1673l-18 9 18 9M612 1684h14" fill="none" stroke="#222" stroke-width="3"/>';
    out += '<path d="M973 1081h275" stroke="#d2d4da" stroke-width="5"/>';

    for (let x = 13; x < 1247; x += 4) {
        let bar = special[x];
        if (!bar) {
            const mid = valueAt(path, x + 5);
            const rising = valueAt(path, x + 9) < valueAt(path, x + 1);
            bar = [mid - 5 - noise() * 24, mid + 3 + noise() * 22, noise() < (rising ? 0.75 : 0.35) ? 'u' : 'd'];
        }
        out += `<path d="M${x} ${bar[0]}V${bar[1]}" stroke="${bar[2] === 'u' ? UP : DOWN}" stroke-width="2"/>`;
    }

    out += line(ma5, '#222') + line(ma10, '#ff9500') + line(ma20, '#cc1680') + line(ma30, '#0a990a') + line(ma60, '#666');

    let stems = '', tags = '';
    marks.forEach(row => {
        const kind = row[0];
        const down = row[1] === 'v';
        const c = markColors[kind];
        toPoints(row.slice(3)).forEach(([x, y]) => {
            const top = down ? y + 22 : y - 88;
            const dotY = down ? y + (kind === 'S' ? 132 : 88) : y - 110;
            stems += `<path d="M${x} ${top}v66" stroke="${c}" stroke-opacity=".7" stroke-width="4" stroke-dasharray="7 5"/>`;
            stems += `<circle cx="${x}" cy="${dotY}" r="7" fill="${c}" fill-opacity=".75"/>`;
            tags += `<rect x="${x - 19}" y="${y - 19}" width="38" height="38" rx="8" fill="${c}" fill-opacity=".75" stroke="#fff" stroke-opacity=".7" stroke-width="1.5"/><text class="mark" x="${x}" y="${y + 13}">${kind}</text>`;
        });
    });
    kline.innerHTML = out + stems + tags;
}

// volume: usual level and single tall bars (x,height,direction)
const volBase = toPoints('12,14 60,14 64,32 100,30 140,28 200,38 208,60 222,85 260,85 272,70 290,40 320,25 400,28 440,38 500,40 560,35 640,42 690,28 694,80 722,70 750,40 810,30 830,65 860,55 890,40 900,90 940,90 980,70 1000,55 1040,35 1100,35 1140,28 1180,18 1246,12');
const volTall = '81,67,u 85,79,u 153,60,u 209,146,u 213,100,u 217,122,d 221,145,u 225,272,d 229,194,u 233,166,d 237,130,u 241,202,d 245,108,d 249,95,d 253,75,u 257,75,u 265,122,u 269,119,u 273,79,d 277,77,d 281,59,d 285,45,d 325,49,d 361,42,u 405,47,u 417,49,u 421,49,u 445,66,u 449,79,u 461,72,u 481,65,u 525,60,u 561,61,u 573,81,d 577,72,u 585,77,u 617,56,u 633,83,u 673,76,u 693,90,u 697,95,u 701,206,u 705,291,u 709,164,u 713,125,d 717,92,u 721,89,u 725,70,d 741,92,u 785,87,u 793,70,u 817,104,u 821,150,u 833,82,u 841,88,u 869,76,u 873,98,d 897,139,u 901,222,u 905,106,d 909,59,d 913,121,u 917,176,u 921,116,u 929,113,u 933,122,u 937,142,u 941,86,d 949,63,d 953,86,d 969,92,d 977,113,d 989,101,d 997,46,u 1001,46,u 1017,87,u 1025,83,d 1097,66,u 1109,122,u 1121,66,d';

function drawVolume() {
    const tall = {};
    volTall.split(' ').forEach(s => {
        const [x, h, d] = s.split(',');
        tall[x] = [+h, d];
    });
    let out = '<rect class="frame" x="13" y="1779" width="1234" height="300"/>';
    for (let x = 13; x < 1247; x += 4) {
        const [h, d] = tall[x] || [valueAt(volBase, x) * (0.75 + noise() * 0.4), noise() < 0.5 ? 'u' : 'd'];
        const w = d === 'u' ? 5 : 3;
        out += `<path d="M${x + 1} 2069v${-h}" stroke="${d === 'u' ? UP : DOWN}" stroke-width="${w}"/>`;
    }
    out += line(vma1, '#f59a12') + line(vma2, '#d428d8') + line(vma3, '#0a990a');
    out += '<text class="axis axis-vol" x="14" y="1830">42.94万</text>';
    volume.innerHTML = out;
}

drawKline();
drawVolume();
```
